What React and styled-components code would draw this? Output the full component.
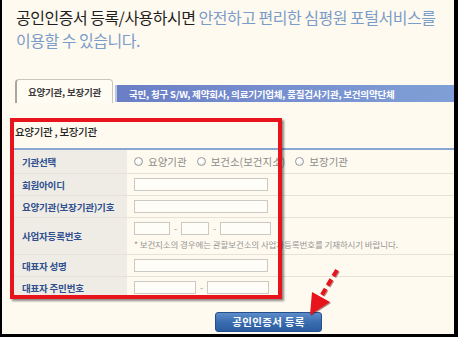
import React from 'react'
import styled, { createGlobalStyle } from 'styled-components'

const GlobalStyle = createGlobalStyle`
  html, body {
    margin: 0;
    padding: 0;
    background: #000;
  }
  * {
    box-sizing: border-box;
  }
`

const FONT = `"Noto Sans CJK KR", "Noto Sans", sans-serif`

const App = () => {
  return (
    <>
      <GlobalStyle />
      <Frame>
        <Heading>
          <Dark>공인인증서 등록/사용하시면</Dark> 안전하고 편리한 심평원 포털서비스를
          <br />
          이용할 수 있습니다.
        </Heading>

        <Tabs>
          <Tab $active>요양기관, 보장기관</Tab>
          <Tab>국민, 청구 S/W, 제약회사, 의료기기업체, 품질검사기관, 보건의약단체</Tab>
        </Tabs>

        <Section>
          <SectionTitle>요양기관 , 보장기관</SectionTitle>
          <Table>
            <Row $h={24}>
              <Label>기관선택</Label>
              <Value>
                <Radio><Dot />요양기관</Radio>
                <Radio><Dot />보건소(보건지소)</Radio>
                <Radio><Dot />보장기관</Radio>
              </Value>
            </Row>
            <Row $h={22}>
              <Label>회원아이디</Label>
              <Value><Field $w={134} /></Value>
            </Row>
            <Row $h={22}>
              <Label>요양기관(보장기관)기호</Label>
              <Value><Field $w={134} /></Value>
            </Row>
            <Row $h={37}>
              <Label>사업자등록번호</Label>
              <Value $stack>
                <Fields>
                  <Field $w={36} />
                  <Dash>-</Dash>
                  <Field $w={28} />
                  <Dash>-</Dash>
                  <Field $w={51} />
                </Fields>
                <Note>* 보건지소의 경우에는 관할보건소의 사업자등록번호를 기재하시기 바랍니다.</Note>
              </Value>
            </Row>
            <Row $h={22}>
              <Label>대표자 성명</Label>
              <Value><Field $w={134} /></Value>
            </Row>
            <Row $h={21} $last>
              <Label>대표자 주민번호</Label>
              <Value>
                <Fields>
                  <Field $w={62} />
                  <Dash>-</Dash>
                  <Field $w={62} />
                </Fields>
              </Value>
            </Row>
          </Table>
        </Section>

        <Actions>
          <SubmitButton>공인인증서 등록</SubmitButton>
        </Actions>

        <Highlight />
        <Arrow viewBox="0 0 50 60">
          <g transform="translate(-295 -265)">
            <line x1="337" y1="270" x2="320" y2="298" stroke="#6b1010" strokeWidth="4" strokeDasharray="7 4" transform="translate(1 1)" opacity="0.5" />
            <line x1="337" y1="270" x2="320" y2="298" stroke="#e8141c" strokeWidth="4" strokeDasharray="7 4" />
            <polygon points="310,315 312,292 330,302" fill="#5a1010" opacity="0.5" transform="translate(1 1)" />
            <polygon points="310,315 312,292 330,302" fill="#e8141c" />
          </g>
        </Arrow>
      </Frame>
    </>
  )
}

export default App

const Frame = styled.div`
  position: relative;
  width: 458px;
  height: 337px;
  overflow: hidden;
  background: #fffaef;
  border-left: 2px solid #000;
  border-right: 4px solid #000;
  border-bottom: 3px solid #000;
  font-family: ${FONT};
  display: flex;
  flex-direction: column;
`

const Heading = styled.h1`
  margin: 0;
  padding: 6px 0 0 14px;
  font-size: 16px;
  line-height: 23px;
  font-weight: 400;
  letter-spacing: -0.5px;
  color: #7b9cc8;
  white-space: nowrap;
`

const Dark = styled.span`
  color: #1f1f1f;
`

const Tabs = styled.div`
  display: flex;
  align-items: flex-end;
  margin-top: 27px;
  padding-left: 13px;
  height: 24px;
`

const Tab = styled.div`
  display: flex;
  align-items: center;
  justify-content: center;
  font-size: 9.5px;
  font-weight: 700;
  letter-spacing: -0.2px;
  white-space: nowrap;
  ${({ $active }) => $active ? `
    width: 98px;
    height: 24px;
    color: #3b3b3b;
    background: #fffcf4;
    border: 1px solid #c9c6bb;
    border-left: 2px solid #a8a69e;
    border-bottom: none;
    border-radius: 4px 4px 0 0;
    margin-right: 2px;
  ` : `
    flex: 1;
    height: 17px;
    margin-bottom: 1px;
    justify-content: flex-start;
    padding-left: 12px;
    color: #fff;
    background: linear-gradient(90deg, #6a7ec5 0%, #7790d0 50%, #7f9fd6 100%);
    border-left: 2px solid #b9c6e6;
  `}
`

const Section = styled.section`
  padding-left: 12px;
`

const SectionTitle = styled.h2`
  margin: 22px 0 9px 1px;
  font-size: 10.5px;
  line-height: 14px;
  font-weight: 500;
  color: #222;
  letter-spacing: -0.3px;
`

const Table = styled.div`
  border-top: 2px solid #8aa6d2;
  display: flex;
  flex-direction: column;
`

const Row = styled.div`
  display: flex;
  height: ${({ $h }) => $h}px;
  border-bottom: ${({ $last }) => ($last ? 'none' : '1px solid #e6e2d6')};
`

const Label = styled.div`
  width: 113px;
  flex-shrink: 0;
  display: flex;
  align-items: center;
  padding-left: 8px;
  background: #eeece5;
  color: #2f4f8f;
  font-size: 9.5px;
  font-weight: 700;
  letter-spacing: -0.2px;
  white-space: nowrap;
`

const Value = styled.div`
  flex: 1;
  display: flex;
  flex-direction: ${({ $stack }) => ($stack ? 'column' : 'row')};
  justify-content: center;
  align-items: ${({ $stack }) => ($stack ? 'flex-start' : 'center')};
  ${({ $stack }) => ($stack ? 'gap: 3px;' : 'justify-content: flex-start;')}
  padding-left: 7px;
  color: #8a8a8a;
  font-size: 9.5px;
`

const Radio = styled.label`
  display: inline-flex;
  align-items: center;
  gap: 5px;
  margin-right: 10px;
  white-space: nowrap;
  color: #8c8c8c;
  font-size: 10.5px;
  letter-spacing: 0;
`

const Dot = styled.span`
  width: 9px;
  height: 9px;
  border-radius: 50%;
  border: 1px solid #9a9a9a;
  background: radial-gradient(circle at 40% 40%, #ffffff 30%, #dcdcdc 100%);
`

const Fields = styled.div`
  display: flex;
  align-items: center;
`

const Field = styled.input`
  width: ${({ $w }) => $w}px;
  height: 13px;
  padding: 0;
  border: 1px solid #cbc9c1;
  background: #fffdf8;
  outline: none;
`

const Dash = styled.span`
  width: 11px;
  text-align: center;
  color: #999;
  font-size: 9px;
`

const Note = styled.div`
  font-size: 8.5px;
  color: #959595;
  white-space: nowrap;
  letter-spacing: -0.1px;
`

const Actions = styled.div`
  padding: 9px 0 0 213px;
`

const SubmitButton = styled.button`
  width: 107px;
  height: 20px;
  border: 1px solid #244f8c;
  border-radius: 3px;
  background: linear-gradient(180deg, #5d8cc9 0%, #3a6db0 50%, #2b5c9f 100%);
  color: #fff;
  font-family: ${FONT};
  font-size: 10.5px;
  font-weight: 700;
  letter-spacing: 0.3px;
  padding: 0;
`

const Highlight = styled.div`
  position: absolute;
  left: 8px;
  top: 118px;
  width: 272px;
  height: 181px;
  border: 4px solid #e8141c;
  box-shadow: 2px 2px 2px rgba(0, 0, 0, 0.45);
  pointer-events: none;
`

const Arrow = styled.svg`
  position: absolute;
  left: 293px;
  top: 265px;
  width: 50px;
  height: 60px;
  overflow: visible;
`
